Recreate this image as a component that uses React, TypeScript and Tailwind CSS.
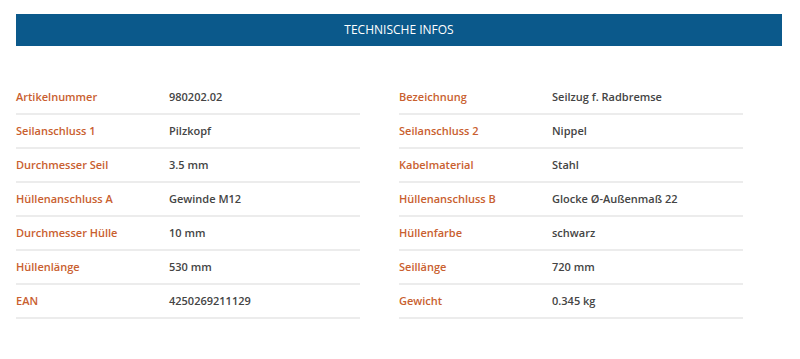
const left: [string, string][] = [
  ["Artikelnummer", "980202.02"],
  ["Seilanschluss 1", "Pilzkopf"],
  ["Durchmesser Seil", "3.5 mm"],
  ["Hüllenanschluss A", "Gewinde M12"],
  ["Durchmesser Hülle", "10 mm"],
  ["Hüllenlänge", "530 mm"],
  ["EAN", "4250269211129"],
];

const right: [string, string][] = [
  ["Bezeichnung", "Seilzug f. Radbremse"],
  ["Seilanschluss 2", "Nippel"],
  ["Kabelmaterial", "Stahl"],
  ["Hüllenanschluss B", "Glocke Ø-Außenmaß 22"],
  ["Hüllenfarbe", "schwarz"],
  ["Seillänge", "720 mm"],
  ["Gewicht", "0.345 kg"],
];

function SpecTable({ rows }: { rows: [string, string][] }) {
  return (
    <div className="w-[344px]">
      {rows.map(([label, value]) => (
        <div key={label} className="flex items-center h-[34px] border-b-2 border-[#ececec]">
          <div className="w-[153px] text-[#c9602f] font-semibold">{label}</div>
          <div className="text-[#444444] font-semibold">{value}</div>
        </div>
      ))}
    </div>
  );
}

export default function App() {
  return (
    <main className="w-[800px] h-[359px] bg-white pl-4 pr-[18px] pt-[14px] text-[11px] font-['Open_Sans',sans-serif]">
      <div className="h-8 bg-[#0b598b] flex items-center justify-center text-white text-[12px]">
        TECHNISCHE INFOS
      </div>
      <div className="grid grid-cols-2 mt-[35px]">
        <SpecTable rows={left} />
        <SpecTable rows={right} />
      </div>
    </main>
  );
}
